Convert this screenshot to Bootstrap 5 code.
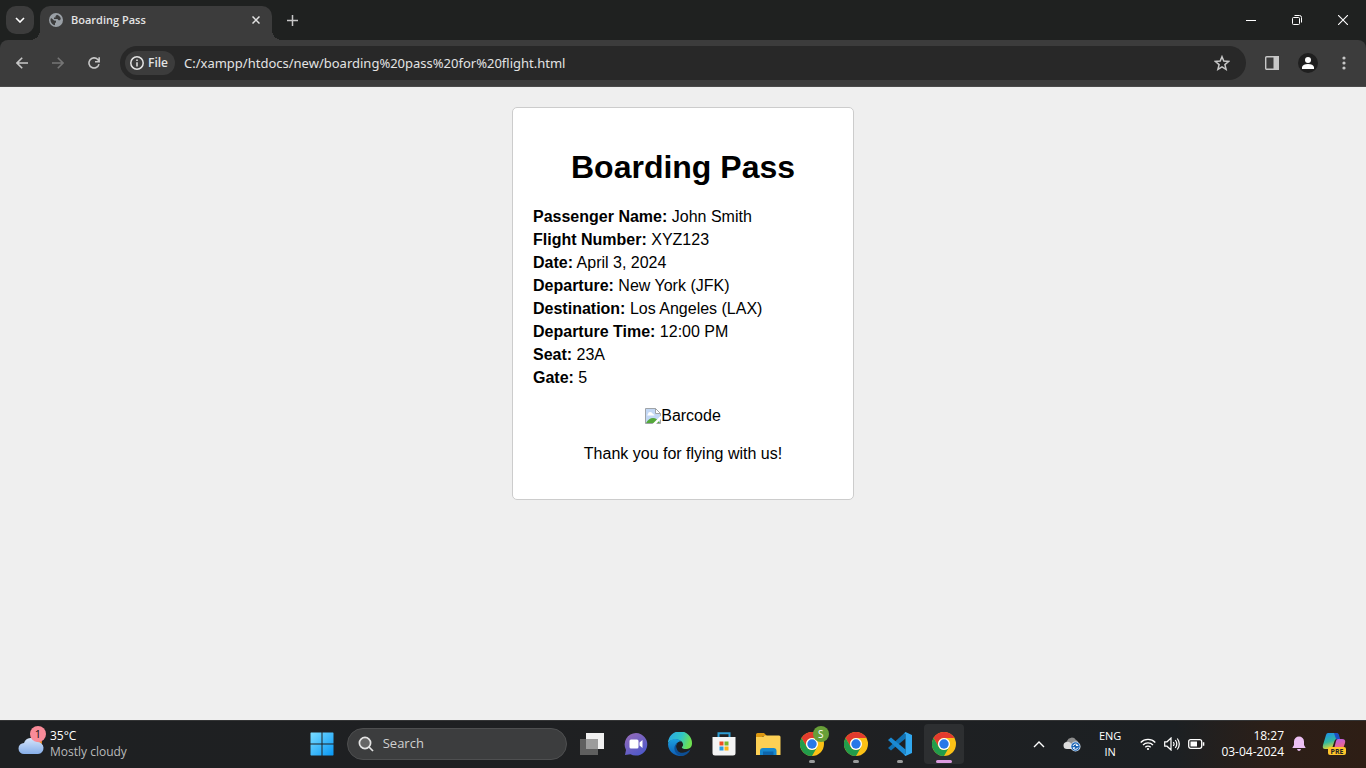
<!DOCTYPE html>
<html lang="en">
<head>
<meta charset="utf-8">
<meta name="viewport" content="width=device-width, initial-scale=1">
<title>Boarding Pass</title>
<link href="https://cdn.jsdelivr.net/npm/bootstrap@5.3.0/dist/css/bootstrap.min.css" rel="stylesheet">
<style>
  body { font-family: "Open Sans", "Noto Sans", sans-serif; font-size: 12px; background: #efefef; }
  svg { display: block; flex: none; }
  button { border: 0; padding: 0; background: none; color: inherit; }
  /* browser frame */
  .tabstrip { height: 40px; background: #1f2120; color: #e3e3e3; padding-left: 6px; }
  .tab-search { width: 28px; height: 28px; border-radius: 10px; background: #3c3c3c; margin: 6px; margin-left: 0; }
  .page-tab { width: 232px; height: 34px; background: #3c3c3c; border-radius: 10px 10px 0 0; padding: 0 8px 6px 9px; font-size: 11px; font-weight: 600; position: relative; }
  .page-tab::before, .page-tab::after { content: ""; position: absolute; bottom: 0; width: 10px; height: 10px; }
  .page-tab::before { left: -10px; background: radial-gradient(circle at 0 0, transparent 10px, #3c3c3c 10px); }
  .page-tab::after { right: -10px; background: radial-gradient(circle at 100% 0, transparent 10px, #3c3c3c 10px); }
  .new-tab { width: 40px; height: 40px; }
  .win-btn { width: 46px; height: 40px; color: #fff; }
  .toolbar-wrap { background: #1f2120; }
  .toolbar { height: 47px; background: #3c3c3c; border-bottom: 1px solid #4a4a4a; border-radius: 8px 8px 0 0; color: #c7c7c7; padding: 0 4px; }
  .tool-btn { width: 36px; height: 34px; }
  .omnibox { height: 34px; border-radius: 17px; background: #282828; margin: 0 8px; padding: 0 6px 0 5px; }
  .chip { height: 24px; border-radius: 12px; background: #3c3c3c; color: #e3e3e3; padding: 0 7px 0 5px; font-weight: 600; gap: 4px; }
  .omnibox input, .task-search input { background: none; border: 0; outline: 0; min-width: 0; padding: 0; }
  .omnibox input { color: #e3e3e3; font: 13px "Noto Sans", sans-serif; margin-left: 9px; }
  .avatar { width: 20px; height: 20px; border-radius: 50%; background: #1f1f1f; color: #fff; }
  /* boarding pass */
  .pass { width: 342px; margin: 20px auto; padding: 20px; border: 1px solid #ccc; border-radius: 5px; background: #fff; color: #000; font: 16px/18px "Liberation Sans", Arial, sans-serif; }
  .pass h1 { font-size: 32px; line-height: 37px; font-weight: 700; margin: 21px 0 22px; }
  .pass-row { margin-bottom: 5px; }
  .pass-code { margin: 20px 0; }
  .pass-note { margin: 0 0 16px; }
  /* taskbar */
  .taskbar { height: 48px; background: linear-gradient(90deg, #1e2022 0, #1f2022 60%, #1c2023 86%, #2c1f18 93%, #2e1e15 100%); box-shadow: inset 0 1px #343536; color: #fff; }
  .task-left { flex: 3 1 0; }
  .task-right { flex: 4 1 0; }
  .weather { line-height: 16px; gap: 6px; margin-left: 18px; }
  .weather-note { color: #b9babb; }
  .alert-dot { position: absolute; top: -6px; right: -2px; width: 16px; height: 16px; border-radius: 50%; background: #f98b99; color: #111; line-height: 16px; font-size: 11px; }
  .task-btn { width: 40px; height: 40px; position: relative; border-radius: 4px; }
  .task-btn.open::after { content: ""; position: absolute; bottom: 1px; left: 17px; width: 6px; height: 3px; border-radius: 2px; background: #9a9b9c; }
  .task-btn.current { background: #2d2f31; }
  .task-btn.current::after { left: 12px; width: 16px; background: #dc9be0; }
  .profile { position: absolute; top: 2px; right: 3px; width: 16px; height: 16px; border-radius: 50%; background: #689f38; line-height: 16px; font-size: 10px; }
  .task-search { width: 220px; height: 32px; border-radius: 16px; background: #3c3d3e; border: 1px solid #4e4f50; margin: 0 1px; padding: 0 10px; gap: 9px; }
  .task-search input { font-size: 13px; color: #d0d0d0; width: 150px; }
  .task-search input::placeholder { color: #d0d0d0; opacity: 1; }
  .lang { line-height: 16px; font-size: 11px; padding: 0 3px 0 2px; }
  .clock { line-height: 16px; font-size: 12px; }
  .tray-gap { margin-right: 18px; }
</style>
</head>
<body class="d-flex flex-column min-vh-100">
<svg width="0" height="0" class="position-absolute" aria-hidden="true">
  <defs>
    <symbol id="chrome" viewBox="0 0 24 24">
      <circle cx="12" cy="12" r="12" fill="#fbc116"/>
      <path d="M1.600 6A12 12 0 0 1 22.400 6H12A6 6 0 0 0 6.800 15Z" fill="#e33b2e"/>
      <path d="M1.600 6A12 12 0 0 0 12 24L17.200 15A6 6 0 0 1 6.800 15Z" fill="#229c4b"/>
      <circle cx="12" cy="12" r="6" fill="#fff"/><circle cx="12" cy="12" r="4.700" fill="#2878e8"/>
    </symbol>
  </defs>
</svg>

<header>
  <div class="tabstrip d-flex">
    <button class="tab-search d-flex align-items-center justify-content-center" aria-label="Search tabs"><svg width="10" height="6" viewBox="0 0 10 6" fill="none" stroke="#fff" stroke-width="1.600"><path d="M1 1l4 4 4-4"/></svg></button>
    <div class="page-tab d-flex align-items-center align-self-end">
      <svg width="14" height="14" viewBox="0 0 14 14"><circle cx="7" cy="7" r="7" fill="#9aa0a6"/><path d="M2 5q2 1 3 2.500l2 .3v1.500l-1 1v2Q2 11.500 1.400 7ZM8 1.800L6.500 3v1.500H5V6h3.500l1 1.200h1.300l1-1.300Q11.500 3 8 1.800Z" fill="#3c3c3c"/></svg>
      <span class="ms-2 me-auto text-nowrap">Boarding Pass</span>
      <button class="p-1" aria-label="Close tab"><svg width="8" height="8" viewBox="0 0 8 8" stroke="#e3e3e3" stroke-width="1.500"><path d="M.5.5l7 7M7.500.5l-7 7"/></svg></button>
    </div>
    <button class="new-tab d-flex align-items-center justify-content-center" aria-label="New tab"><svg width="11" height="11" viewBox="0 0 11 11" stroke="#c7c7c7" stroke-width="1.500"><path d="M5.500 0v11M0 5.500h11"/></svg></button>
    <div class="d-flex ms-auto">
      <button class="win-btn d-flex align-items-center justify-content-center" aria-label="Minimize"><svg width="10" height="10" viewBox="0 0 10 10" stroke="#fff"><path d="M0 5.500h10"/></svg></button>
      <button class="win-btn d-flex align-items-center justify-content-center" aria-label="Restore"><svg width="10" height="10" viewBox="0 0 10 10" fill="none" stroke="#fff"><rect x=".5" y="2.500" width="7" height="7" rx="1"/><path d="M2.500.5H7.500Q9.500.5 9.500 2.500V7.500"/></svg></button>
      <button class="win-btn d-flex align-items-center justify-content-center" aria-label="Close"><svg width="10" height="10" viewBox="0 0 10 10" stroke="#fff" stroke-width="1.100"><path d="M0 0l10 10M10 0L0 10"/></svg></button>
    </div>
  </div>
  <div class="toolbar-wrap">
    <nav class="toolbar d-flex align-items-center" aria-label="Browser">
      <button class="tool-btn d-flex align-items-center justify-content-center" aria-label="Back"><svg width="12" height="12" viewBox="0 0 12 12" fill="none" stroke="#c7c7c7" stroke-width="1.600"><path d="M12 6H1.200M6.200.8L1 6l5.200 5.200"/></svg></button>
      <button class="tool-btn d-flex align-items-center justify-content-center" aria-label="Forward"><svg width="12" height="12" viewBox="0 0 12 12" fill="none" stroke="#757575" stroke-width="1.600"><path d="M0 6h10.800M5.800.8L11 6l-5.200 5.200"/></svg></button>
      <button class="tool-btn d-flex align-items-center justify-content-center" aria-label="Reload"><svg width="12" height="12" viewBox="0 0 13 13" fill="none" stroke="#c7c7c7" stroke-width="1.700"><path d="M11.900 7.700A5.500 5.500 0 1 1 10.600 2.700L12 4.500M12.100.4v4.700H7.600"/></svg></button>
      <div class="omnibox d-flex align-items-center flex-grow-1">
        <button class="chip d-flex align-items-center"><svg width="14" height="14" viewBox="0 0 14 14" fill="none" stroke="#e3e3e3" stroke-width="1.500"><circle cx="7" cy="7" r="6.200"/><path d="M7 6.200v4.200M7 3.500v1.500"/></svg>File</button>
        <input class="flex-grow-1" type="text" aria-label="Address" value="C:/xampp/htdocs/new/boarding%20pass%20for%20flight.html">
        <button class="tool-btn d-flex align-items-center justify-content-center" aria-label="Bookmark"><svg width="16" height="16" viewBox="0 0 16 16" fill="none" stroke="#c7c7c7" stroke-width="1.500"><path d="M8 1.700l1.800 4.400 4.800.4-3.700 3.100 1.200 4.700L8 11.800l-4.100 2.500 1.200-4.700-3.700-3.100 4.800-.4Z"/></svg></button>
      </div>
      <button class="tool-btn d-flex align-items-center justify-content-center" aria-label="Side panel"><svg width="14" height="14" viewBox="0 0 14 14"><rect x=".7" y=".7" width="12.600" height="12.600" rx="1" fill="none" stroke="#c7c7c7" stroke-width="1.400"/><path d="M8.500 0H14v14H8.500Z" fill="#c7c7c7"/></svg></button>
      <button class="tool-btn d-flex align-items-center justify-content-center" aria-label="Profile"><span class="avatar d-flex align-items-center justify-content-center"><svg width="12" height="12" viewBox="0 0 12 12" fill="#fff"><circle cx="6" cy="3" r="3"/><path d="M0 12v-2Q1 7 6 7t6 3v2Z"/></svg></span></button>
      <button class="tool-btn d-flex align-items-center justify-content-center" aria-label="Menu"><svg width="4" height="14" viewBox="0 0 4 14" fill="#c7c7c7"><circle cx="2" cy="2" r="1.600"/><circle cx="2" cy="7" r="1.600"/><circle cx="2" cy="12" r="1.600"/></svg></button>
    </nav>
  </div>
</header>

<main class="flex-grow-1">
  <section class="pass">
    <h1 class="text-center">Boarding Pass</h1>
    <div class="pass-row"><strong>Passenger Name:</strong> John Smith</div>
    <div class="pass-row"><strong>Flight Number:</strong> XYZ123</div>
    <div class="pass-row"><strong>Date:</strong> April 3, 2024</div>
    <div class="pass-row"><strong>Departure:</strong> New York (JFK)</div>
    <div class="pass-row"><strong>Destination:</strong> Los Angeles (LAX)</div>
    <div class="pass-row"><strong>Departure Time:</strong> 12:00 PM</div>
    <div class="pass-row"><strong>Seat:</strong> 23A</div>
    <div><strong>Gate:</strong> 5</div>
    <div class="pass-code d-flex justify-content-center align-items-center">
      <svg width="16" height="16" viewBox="0 0 16 16"><path d="M.5.5h10l5 5v10H.5Z" fill="#c3d8f5" stroke="#a0a4a8"/><path d="M10.500.5v5h5Z" fill="#fff" stroke="#a0a4a8"/><path d="M3 6q0-2 2-2t3 2q1.500 0 1.500 1.500H3Q1.500 7.500 3 6Z" fill="#fff"/><path d="M1 15q3-5 7-5t7 5Z" fill="#54a83b"/><path d="M16 7.500V11l-5 5H7.500Z" fill="#fff"/></svg><span>Barcode</span>
    </div>
    <p class="pass-note text-center">Thank you for flying with us!</p>
  </section>
</main>

<footer class="taskbar d-flex align-items-center">
  <div class="task-left">
    <button class="weather d-flex align-items-center text-start text-nowrap">
      <span class="position-relative"><svg width="26" height="24" viewBox="0 0 26 24"><defs><linearGradient id="cl" x2="0" y2="1"><stop stop-color="#d5e5fa"/><stop offset="1" stop-color="#86aee9"/></linearGradient></defs><circle cx="18" cy="10" r="6" fill="#ef8b23"/><path d="M6 22a5.500 5.500 0 0 1 0-11 7 7 0 0 1 13-1 6 6 0 0 1 1 12Z" fill="url(#cl)"/></svg><span class="alert-dot text-center">1</span></span>
      <span><span class="d-block">35°C</span><span class="weather-note d-block">Mostly cloudy</span></span>
    </button>
  </div>
  <div class="d-flex align-items-center gap-1">
    <button class="task-btn d-flex align-items-center justify-content-center" aria-label="Start"><svg width="24" height="24" viewBox="0 0 24 24"><defs><linearGradient id="wn" x2="1" y2="1"><stop stop-color="#7bdcff"/><stop offset="1" stop-color="#0797f5"/></linearGradient></defs><path d="M1 .5h10.500v11H.5V1ZM12.500.5H23l.5.5v10.500h-11ZM.5 12.500h11v11H1L.5 23ZM12.500 12.500h11V23l-.5.5H12.500Z" fill="url(#wn)"/></svg></button>
    <label class="task-search d-flex align-items-center"><svg width="16" height="16" viewBox="0 0 16 16" fill="#666" stroke="#e4e4e4" stroke-width="1.700"><circle cx="7" cy="7" r="5.600"/><path d="M11 11l4 4"/></svg><input type="text" placeholder="Search" aria-label="Search"></label>
    <button class="task-btn d-flex align-items-center justify-content-center" aria-label="Task view"><svg width="24" height="24" viewBox="0 0 24 24"><path d="M6 1h18v16H6Z" fill="#f0f0f0"/><path d="M0 7h18v16H0Z" fill="#5f5f5f"/><path d="M6 7h12v10H6Z" fill="#9c9c9c"/></svg></button>
    <button class="task-btn d-flex align-items-center justify-content-center" aria-label="Chat"><svg width="24" height="24" viewBox="0 0 24 24"><defs><linearGradient id="ct" x2=".6" y2="1"><stop stop-color="#9a6cb8"/><stop offset="1" stop-color="#5059c9"/></linearGradient></defs><path d="M12 1a11.300 11.300 0 1 1-5.500 21.200L1 23l1-5A11.500 11.500 0 0 1 12 1Z" fill="url(#ct)"/><rect x="5.500" y="7.500" width="9" height="9" rx="1.500" fill="#fff"/><path d="M15.500 10.500L18.500 8v8l-3-2.500Z" fill="#fff"/></svg></button>
    <button class="task-btn d-flex align-items-center justify-content-center" aria-label="Edge"><svg width="24" height="24" viewBox="0 0 24 24"><defs><linearGradient id="eg" x2="1" y2=".3"><stop stop-color="#2aa6e8"/><stop offset=".6" stop-color="#30c6c5"/><stop offset="1" stop-color="#6de052"/></linearGradient><linearGradient id="eb" x2="0" y2="1"><stop stop-color="#1ca0e0"/><stop offset="1" stop-color="#0c5cb5"/></linearGradient></defs><path d="M0 11A12 12 0 0 1 24 11.500C24 16 20.500 17 18 17c-3.500 0-4.500-1.200-4-2 1-1 1.200-2 1-3C14 7 4 5.500 0 11Z" fill="url(#eg)"/><path d="M0 12C1 7 10 5 13 9.500c-3-.5-5 2-5 5 0 5 5 8 9 8.400A12 12 0 0 1 0 12Z" fill="url(#eb)"/><path d="M9.800 10.500C6 15 9 22 16 20.500c3-.7 5-2 6.500-3.300C20 23.500 14 24.500 11.500 23.500 5 21 5 13 9.800 10.500Z" fill="#0d4f95"/></svg></button>
    <button class="task-btn d-flex align-items-center justify-content-center" aria-label="Store"><svg width="24" height="24" viewBox="0 0 24 24"><path d="M6.500 6V1.200h11V6" fill="none" stroke="#2e9dd4" stroke-width="2"/><path d="M.5 5h23v16q0 2.500-2.500 2.500H3Q.5 23.500.5 21Z" fill="#f4f4f4"/><path d="M7.500 9.500h4v4h-4Z" fill="#ef4e23"/><path d="M12.500 9.500h4v4h-4Z" fill="#78b82a"/><path d="M7.500 14.500h4v4h-4Z" fill="#2a9ce0"/><path d="M12.500 14.500h4v4h-4Z" fill="#fbb515"/></svg></button>
    <button class="task-btn d-flex align-items-center justify-content-center" aria-label="File Explorer"><svg width="26" height="24" viewBox="0 0 26 24"><path d="M1 2.500Q1 1 2.500 1H9l3 3h-4l-1 2H1Z" fill="#dc9710"/><path d="M1 5h6.500L10 3.500h14q1.500 0 1.500 1.500v18H1Z" fill="#fdd055"/><path d="M5 23v-4q0-3 3-3h10.500q3 0 3 3v4Z" fill="#1788cf"/><path d="M8 19.500h10.500V23H8Z" fill="#0d65ac"/></svg></button>
    <button class="task-btn open d-flex align-items-center justify-content-center" aria-label="Chrome, S"><svg width="24" height="24"><use href="#chrome"/></svg><span class="profile text-center">S</span></button>
    <button class="task-btn open d-flex align-items-center justify-content-center" aria-label="Chrome"><svg width="24" height="24"><use href="#chrome"/></svg></button>
    <button class="task-btn open d-flex align-items-center justify-content-center" aria-label="Visual Studio Code"><svg width="24" height="24" viewBox="0 0 24 24"><path d="M17.500 0v6.500L3 18.500 0 16Z" fill="#0f72b5"/><path d="M0 8l3-2.500L17.500 17.500V24Z" fill="#1b8ad3"/><path d="M17.500 0L24 3v18l-6.500 3-1.200-1.200 1.200-1V2.200l-1.200-1Z" fill="#31a8f0"/></svg></button>
    <button class="task-btn open current d-flex align-items-center justify-content-center" aria-label="Chrome, Boarding Pass"><svg width="24" height="24"><use href="#chrome"/></svg></button>
  </div>
  <div class="task-right d-flex align-items-center justify-content-end text-nowrap">
    <button class="tray-gap" aria-label="Hidden icons"><svg width="12" height="7" viewBox="0 0 12 7" fill="none" stroke="#fff" stroke-width="1.400"><path d="M1 6l5-5 5 5"/></svg></button>
    <button class="me-3" aria-label="OneDrive"><svg width="18" height="16" viewBox="0 0 18 16"><path d="M4 11a4 4 0 0 1 0-6A5 5 0 0 1 13 4q3 1 2 6Z" fill="#8d8d8d"/><path d="M4 13A3.500 3.500 0 0 1 4 6q3-1 5 3v4Z" fill="#ddd"/><circle cx="12.500" cy="10.500" r="5" fill="#dceafa"/><circle cx="12.500" cy="10.500" r="4.200" fill="#1c64b4"/><path d="M10 10a2.700 2.700 0 0 1 5-.5h-2M15 11.500a2.700 2.700 0 0 1-5 .3h2" fill="none" stroke="#fff"/></svg></button>
    <button class="lang text-center me-3"><span class="d-block">ENG</span><span class="d-block">IN</span></button>
    <button class="d-flex align-items-center gap-2 me-3" aria-label="Network, volume and battery">
      <svg width="16" height="14" viewBox="0 0 16 14" fill="none" stroke="#fff" stroke-width="1.300"><path d="M.7 5.500a10.300 10.300 0 0 1 14.600 0M3 8a7 7 0 0 1 10 0M5.300 10.200a3.800 3.800 0 0 1 5.400 0"/><circle cx="8" cy="12" r="1.100" fill="#fff" stroke="none"/></svg>
      <svg width="16" height="14" viewBox="0 0 16 14" fill="none" stroke="#fff" stroke-width="1.200"><path d="M.7 4.800H3L7 1v12L3 9.200H.7ZM9.300 5q1.500 2 0 4M11.300 3q3 4 0 8M13.300 1.500q4 5.500 0 11"/></svg>
      <svg width="17" height="12" viewBox="0 0 17 12"><rect x=".7" y="1.700" width="13" height="8.600" rx="2" fill="none" stroke="#fff" stroke-width="1.300"/><path d="M2.500 3.500H9v5H2.500ZM14.800 4.300h1.500v3.400h-1.500Z" fill="#fff"/></svg>
    </button>
    <button class="clock text-end me-2"><span class="d-block">18:27</span><span class="d-block">03-04-2024</span></button>
    <button class="me-3" aria-label="Notifications"><svg width="14" height="16" viewBox="0 0 14 16" fill="#ecc0f3"><path d="M7 .5a5 5 0 0 1 5 5V9l1.700 3H.3L2 9V5.500A5 5 0 0 1 7 .5ZM5 13h4q-.5 2-2 2t-2-2Z"/></svg></button>
    <button class="me-1 pe-3" aria-label="Copilot preview"><svg width="24" height="24" viewBox="0 0 24 24"><defs><linearGradient id="ca" x2=".3" y2="1"><stop stop-color="#1a8df0"/><stop offset=".6" stop-color="#32b9a0"/><stop offset="1" stop-color="#d9d638"/></linearGradient><linearGradient id="cb" x2=".3" y2="1"><stop stop-color="#b65cf0"/><stop offset="1" stop-color="#f3687c"/></linearGradient></defs><path d="M6 1h8q2 0 2.500 2l1 4h-2.500q-2 0-2.500 2L10.500 15q-.5 2-3 2H3q-3 0-2-4L4 3q.5-2 2-2Z" fill="url(#ca)"/><path d="M12 1h2.500q2 0 2.500 2l1 4h-4Z" fill="#1d4fc4"/><path d="M16 7h4q4 0 3 4l-2 6h-9l2-8q.5-2 2-2Z" fill="url(#cb)"/><rect x="6" y="15" width="18" height="8" rx="2" fill="#ffc52b"/><text x="15" y="22" font-size="7" font-weight="700" text-anchor="middle" fill="#222">PRE</text></svg></button>
  </div>
</footer>
<script src="https://cdn.jsdelivr.net/npm/bootstrap@5.3.0/dist/js/bootstrap.bundle.min.js"></script>
</body>
</html>
